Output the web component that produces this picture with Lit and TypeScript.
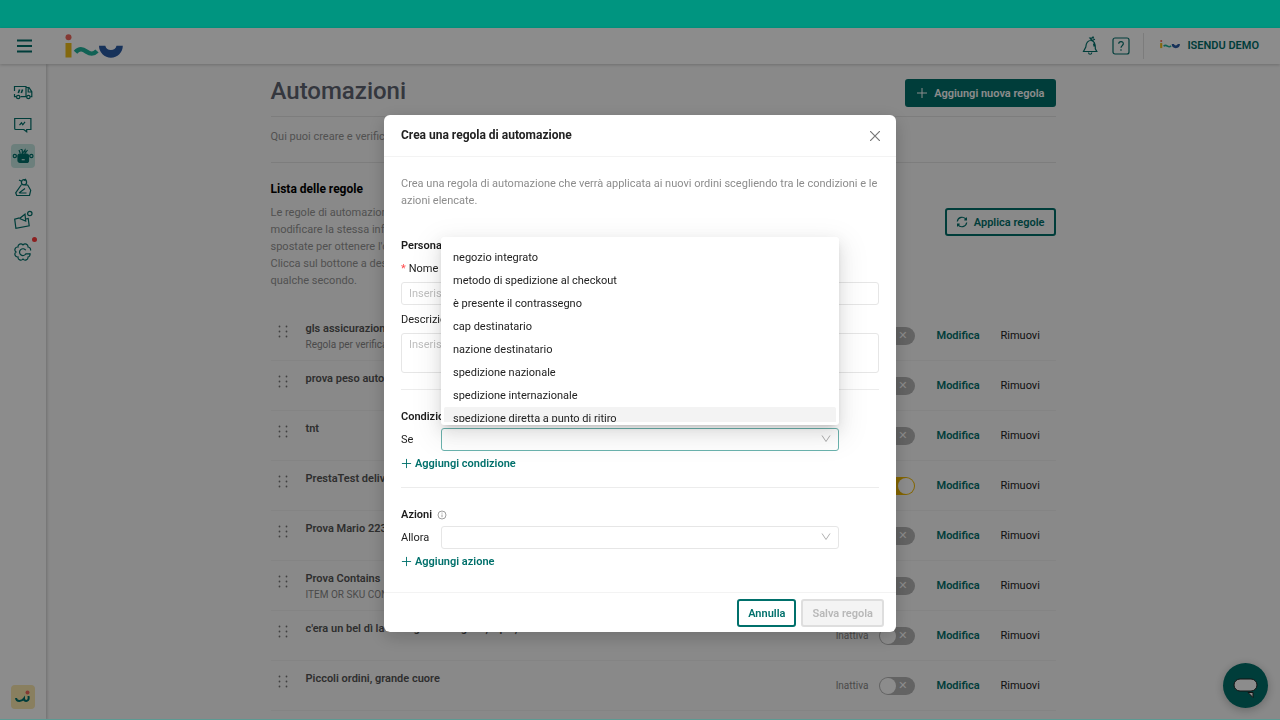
import { LitElement, html, css, svg } from "lit";
import { customElement, state, query } from "lit/decorators.js";
import { classMap } from "lit/directives/class-map.js";

interface Rule {
  title: string;
  note?: string;
  active?: boolean;
}

const RULES: Rule[] = [
  { title: "gls assicurazione", note: "Regola per verificare l'assicurazione" },
  { title: "prova peso automatico" },
  { title: "tnt" },
  { title: "PrestaTest delivery", active: true },
  { title: "Prova Mario 223" },
  { title: "Prova Contains", note: "ITEM OR SKU CONTAINS" },
  { title: "c'era un bel dì la bella gallina seguita, e poi," },
  { title: "Piccoli ordini, grande cuore" },
];

const CONDITIONS = [
  "peso",
  "negozio integrato",
  "metodo di spedizione al checkout",
  "è presente il contrassegno",
  "cap destinatario",
  "nazione destinatario",
  "spedizione nazionale",
  "spedizione internazionale",
  "spedizione diretta a punto di ritiro",
];

const NAV = [
  {
    label: "Spedizioni",
    icon: svg`<path d="M3.500 11V6.500H15v10.200H9.500M3.500 14v2.700H5"/><path d="M15 7.500h3l2.800 4.300v4.900h-1.500M17.200 8v4h3.300M15 16.700h.5"/><circle cx="7.200" cy="17" r="1.700"/><circle cx="17.400" cy="17" r="1.700"/><path stroke-width="1.600" d="M7.300 13l1.300-3.500M10.300 13l1.300-3.500"/>`,
  },
  {
    label: "Messaggi",
    icon: svg`<path d="M13 17.500H4.700a1 1 0 0 1-1-1V6.500h16.200v11h-4.200v2.200l-3-2.200"/><path d="M8.500 13.200l2-2.400 1.300 2 2.200-2.900"/>`,
  },
  {
    label: "Automazioni",
    active: true,
    icon: svg`<rect x="7" y="10" width="10.500" height="8.500" rx="2" fill="currentColor"/><path d="M10.700 15.700h3" stroke="#c5e8e2"/><circle cx="3.800" cy="12" r="1.600"/><circle cx="20.400" cy="12" r="1.600"/><path d="M5.400 12h1M18 12h1M8 6l1.300 3.500M11.200 6l.2 3.500L14 6v3.500L16.500 6M9.500 5.500h2"/>`,
  },
  {
    label: "Clienti",
    icon: svg`<circle cx="13" cy="6.300" r="2.600"/><path d="M8 4l3 1.500M13 4.500l2-1.500M10.500 8.500l-5.800 8.300 1 2.700h12.800l1.200-5.200-3-5.300h-3M8 17l6-4.500M8.500 17h7"/>`,
  },
  {
    label: "Campagne",
    icon: svg`<path d="M8.500 9.800l-4.800 1.400 1.200 9.200 13.300-2.600-1-7.300-2.400.5"/><path d="M8.500 10.500l5.500-4.300.7 6.800-6.200-2.500"/><circle cx="18.800" cy="5.500" r="2.200"/>`,
  },
  {
    label: "Impostazioni",
    badge: true,
    icon: svg`<path d="M18.800 13.500A2.600 2.600 0 0 1 17 17a2.800 2.800 0 0 1-5 2a2.800 2.800 0 0 1-5-2a2.800 2.800 0 0 1-2-5a2.800 2.800 0 0 1 2-5a2.800 2.800 0 0 1 5-2a2.800 2.800 0 0 1 5 2a2.800 2.800 0 0 1 2.500 3.500"/><path d="M14.800 10.300a3.400 3.400 0 1 0 .1 3.500h4.500"/>`,
  },
];

const brand = svg`
  <circle cx="3.500" cy="3.200" r="3" fill="#f0695e"/>
  <rect x="0.500" y="9" width="6" height="14.500" fill="#eebd1a"/>
  <path d="M10.500 18.300c4-4.500 7.500-3.200 11-.7 3.500 2.400 6.500 3.500 10.500-.6" fill="none" stroke="#1fb39b" stroke-width="4.600"/>
  <path d="M34 11.800h6.300a5.800 5.800 0 0 0 11.200 0h6.300a11.900 11.900 0 0 1-23.800 0z" fill="#2b5ba5"/>`;

const plus = svg`<path d="M6 1v10M1 6h10"/>`;
const chevron = html`<svg class="chevron" width="10" height="10" viewBox="0 0 10 10" aria-hidden="true"><path d="M1 1.500l4 6 4-6"/></svg>`;
const info = html`<svg class="info" width="10" height="10" viewBox="0 0 10 10" aria-hidden="true"><circle cx="5" cy="5" r="4"/><path d="M5 4.500v2.700M5 2.600v1"/></svg>`;

@customElement("app-root")
export class AppRoot extends LitElement {
  @state() private rules = RULES;
  @query(".options") private options!: HTMLElement;

  static styles = css`
    :host {
      --teal: #00706b;
      display: block;
      height: 100vh;
      overflow: hidden;
      font: 11px/17px Roboto, "Liberation Sans", sans-serif;
      color: #222;
    }
    *, *::before { box-sizing: border-box; }
    h1, h2, h3, p, ul { margin: 0; padding: 0; font-size: inherit; }
    ul { list-style: none; }
    button, input, textarea, select { font: inherit; color: inherit; margin: 0; }
    button { cursor: pointer; padding: 0; border: 0; background: none; }
    a { color: inherit; text-decoration: none; }
    svg { flex: none; display: block; fill: none; stroke: currentColor; }

    .app { display: flex; flex-direction: column; height: 100%; background: #fafafa; }
    .banner { flex: none; height: 28px; background: #009580; }
    .topbar {
      flex: none; display: flex; align-items: center; height: 36px; padding: 0 21px 1px 16px;
      background: #fff; box-shadow: 0 1px 3px rgba(0, 0, 0, .2); color: var(--teal); z-index: 1;
    }
    .brand { margin-left: 32px; stroke: none; }
    .tools { display: flex; align-items: center; margin-left: auto; gap: 13px; }
    .account { display: flex; align-items: center; gap: 7px; height: 26px; padding-left: 16px; border-left: 1px solid #e2e2e2; font-weight: 600; }
    .brand-small { stroke: none; }

    .body { flex: 1; min-height: 0; display: flex; }
    .side {
      flex: none; display: flex; flex-direction: column; gap: 8px; width: 46px; padding: 16px 0 11px;
      align-items: center; background: #fff; box-shadow: 1px 0 3px rgba(0, 0, 0, .2); color: var(--teal);
    }
    .nav { position: relative; display: block; width: 24px; height: 24px; border-radius: 4px; stroke-width: 1.200; }
    .nav.on { background: #c5e8e2; }
    .nav.note { margin-top: auto; background: #f9e7ad; }
    .dot { position: absolute; top: -3px; right: -2px; width: 5px; height: 5px; border-radius: 50%; background: #ff3b3b; }

    .main { flex: 1; min-width: 0; padding: 15px 24px 0; }
    .content { max-width: 785px; margin: 0 auto; }
    .head { display: flex; align-items: flex-start; justify-content: space-between; height: 38px; border-bottom: 1px solid #e4e4e4; }
    h1 { font-size: 24px; line-height: 25px; font-weight: 500; color: #5f6472; }
    .primary, .outline {
      display: flex; align-items: center; justify-content: center; gap: 6px; height: 28px; padding: 0 9px;
      border: 2px solid var(--teal); border-radius: 3px; font-weight: 600; white-space: nowrap;
    }
    .primary { background: var(--teal); color: #fff; }
    .outline { background: #fff; color: var(--teal); }
    .outline:disabled { border-color: #dedede; background: #f4f4f4; color: #b8b8b8; }
    .lead { padding: 11px 0 17px; border-bottom: 1px solid #e4e4e4; color: #949494; }
    .intro { display: flex; align-items: flex-start; justify-content: space-between; padding: 18px 0 22px; }
    .intro h2 { margin-bottom: 6px; font-size: 12px; font-weight: 700; color: #000; }
    .intro p { color: #949494; }
    .intro .outline { margin-top: 27px; background: #fafafa; }

    .rule {
      display: grid; grid-template-columns: 35px 1fr auto 36px 86px 40px; height: 50px; padding-right: 15px;
      align-items: center; border-bottom: 1px solid #f0f0f0;
    }
    .grip { align-self: start; margin: 14px 0 0 7px; cursor: grab; fill: #777; stroke: none; }
    .text { align-self: start; padding-top: 10px; line-height: 16px; }
    .text h3 { font-weight: 600; color: #555; }
    .text p, .status { font-size: 10px; color: #888; }
    .status { margin-right: 10px; }
    .switch { appearance: none; display: block; position: relative; width: 36px; height: 18px; margin: 0; border-radius: 9px; background: #b4b4b4; cursor: pointer; }
    .switch::before { content: ""; position: absolute; top: 1px; left: 1px; width: 16px; height: 16px; border-radius: 50%; background: #fff; }
    .switch::after { content: "✕"; position: absolute; right: 7px; top: 1px; font: 11px/16px "DejaVu Sans", sans-serif; color: #fff; }
    .switch:checked { background: #f0b800; }
    .switch:checked::before { left: auto; right: 1px; }
    .switch:checked::after { content: none; }
    .edit { padding-left: 22px; font-weight: 600; color: var(--teal); }

    .chat {
      position: fixed; right: 12px; bottom: 12px; width: 45px; height: 45px; border-radius: 50%;
      background: var(--teal); box-shadow: 0 2px 10px rgba(0, 0, 0, .25);
    }
    .edge { position: fixed; inset: auto 0 0; height: 1px; background: #5c9a93; z-index: 3; }

    .mask { position: fixed; inset: 28px 0 0; display: flex; align-items: flex-start; justify-content: center; padding-top: 87px; background: rgba(0, 0, 0, .45); z-index: 2; }
    .modal { width: 512px; max-width: 100%; border-radius: 6px; background: #fff; box-shadow: 0 5px 18px rgba(0, 0, 0, .2); }
    .modal-head { display: flex; align-items: center; justify-content: space-between; height: 42px; padding: 0 16px 0 17px; border-bottom: 1px solid #f3f3f3; }
    .modal-head h2 { font-size: 12px; font-weight: 700; }
    .close { color: #777; }
    .form { padding: 18px 17px 22px; }
    .form > p { color: #8c8c8c; }
    .form h3 { display: flex; align-items: center; gap: 5px; font-weight: 600; color: #1c1c1c; }
    .form h3.first { margin: 28px 0 6px; }
    .info { color: #888; stroke-width: .8; }
    .field { display: block; }
    .req { margin-right: 3px; color: #ff4d4f; }
    .box { display: block; width: 100%; height: 23px; padding: 0 7px; border: 1px solid #e6e6e6; border-radius: 3px; background: #fff; outline: 0; resize: none; }
    .box::placeholder { color: #bfbfbf; }
    .field .box { margin: 5px 0 6px; }
    .field textarea.box { height: 40px; margin: 5px 0 16px; padding: 2px 7px; }
    .part { padding-top: 18px; border-top: 1px solid #ececec; }
    .part + .part { margin-top: 15px; }
    .line { display: grid; grid-template-columns: 40px 1fr 40px; align-items: center; margin: 3px 0 4px; }
    .picker { position: relative; }
    .picker select { appearance: none; }
    .chevron { position: absolute; right: 8px; top: 6px; color: #b0b0b0; pointer-events: none; }
    .open .box { border-color: #6bb3ae; }
    .menu {
      position: absolute; left: 0; right: 0; bottom: 26px; padding: 3px; border-radius: 3px; background: #fff;
      box-shadow: 0 3px 6px -4px rgba(0, 0, 0, .3), 0 6px 16px rgba(0, 0, 0, .1), 0 9px 28px 8px rgba(0, 0, 0, .06);
    }
    .options { height: 182px; overflow: hidden; }
    .option { display: block; width: 100%; height: 23px; padding: 0 9px; border-radius: 2px; text-align: left; color: #222; }
    .option.on { background: #f3f3f3; }
    .add { display: flex; align-items: center; gap: 3px; font-weight: 600; color: var(--teal); }
    .modal-foot { display: flex; justify-content: flex-end; gap: 5px; padding: 6px 12px 5px; border-top: 1px solid #f3f3f3; }
  `;

  firstUpdated() {
    this.options.scrollTop = 17;
  }

  private toggle(index: number) {
    this.rules = this.rules.map((r, i) => (i === index ? { ...r, active: !r.active } : r));
  }

  private renderRule(rule: Rule, i: number) {
    return html`<li class="rule">
      <svg class="grip" width="10" height="13" viewBox="0 0 10 13" aria-hidden="true">
        ${[1.5, 6.5, 11.5].map((y) => svg`<circle cx="1.500" cy=${y} r=".9"/><circle cx="8.500" cy=${y} r=".9"/>`)}
      </svg>
      <div class="text"><h3>${rule.title}</h3>${rule.note ? html`<p>${rule.note}</p>` : ""}</div>
      <label class="status" for="rule-${i}">${rule.active ? "Attiva" : "Inattiva"}</label>
      <input class="switch" id="rule-${i}" type="checkbox" .checked=${!!rule.active} @change=${() => this.toggle(i)} />
      <a class="edit" href="#">Modifica</a>
      <a class="remove" href="#">Rimuovi</a>
    </li>`;
  }

  render() {
    return html`
      <div class="app">
        <div class="banner"></div>
        <header class="topbar">
          <button aria-label="Menu">
            <svg width="17" height="16" viewBox="0 0 17 16" stroke-width="2.200"><path d="M1 2.500h15M1 8h15M1 13.500h15"/></svg>
          </button>
          <svg class="brand" width="58" height="24" viewBox="0 0 58 24" role="img" aria-label="isendu">${brand}</svg>
          <div class="tools">
            <button aria-label="Notifiche">
              <svg width="18" height="20" viewBox="0 0 18 20" stroke-width="1.200"><path d="M2.500 15.500h13.300l-1.500-2.700c.2-4.300-.1-7.600-4-8.300C6.200 4.300 5.100 7.500 4.800 11l-2.300 4.500zM7.500 16.500c.3 2.300 3 2.300 3.300 0M11 4.500L9 2.200h2L12 1l.8 1.500M11 4.500l3-1.300M12.500 7.500l.7 3"/></svg>
            </button>
            <button aria-label="Aiuto">
              <svg width="18" height="18" viewBox="0 0 18 18" stroke-width="1.200"><rect x="1" y="1" width="16" height="16" rx="2"/><path d="M6.700 6.700c.2-3 4.800-2.800 4.600.2-.1 1.700-2.300 1.900-2.300 3.900M9 12.300v1.400"/></svg>
            </button>
            <a class="account" href="#">
              <svg class="brand-small" width="20" height="13" viewBox="0 0 58 32" aria-hidden="true">${brand}</svg>
              <span>ISENDU DEMO</span>
            </a>
          </div>
        </header>
        <div class="body">
          <nav class="side">
            ${NAV.map((n) => html`<a class=${classMap({ nav: true, on: !!n.active })} href="#" aria-label=${n.label}>
              <svg width="24" height="24" viewBox="0 0 24 24">${n.icon}</svg>
              ${n.badge ? html`<span class="dot"></span>` : ""}
            </a>`)}
            <a class="nav note" href="#" aria-label="isendu">
              <svg width="24" height="24" viewBox="0 0 24 24" stroke="#eebd1a" stroke-width="2"><path d="M5 13c.5 4 5.500 4 8 .5 0 3 4.500 3.500 4.700-.5l-.2-2"/><circle cx="16.500" cy="7.500" r="2" fill="#f0695e" stroke="none"/></svg>
            </a>
          </nav>
          <main class="main">
            <div class="content">
              <div class="head">
                <h1>Automazioni</h1>
                <button class="primary"><svg width="12" height="12" viewBox="0 0 12 12">${plus}</svg>Aggiungi nuova regola</button>
              </div>
              <p class="lead">Qui puoi creare e verificare le regole di automazione.</p>
              <section class="intro">
                <div>
                  <h2>Lista delle regole</h2>
                  <p>Le regole di automazione vengono applicate in ordine. Se due regole vanno a<br />modificare la stessa informazione, prevale l'ultima. Le regole possono essere<br />spostate per ottenere l'ordine desiderato.<br />Clicca sul bottone a destra per applicare le regole, potrebbe richiedere<br />qualche secondo.</p>
                </div>
                <button class="outline">
                  <svg width="12" height="12" viewBox="0 0 12 12" stroke-width="1.200"><path d="M1.300 5.500a4.800 4.800 0 0 1 8.800-2M10.700 6.500a4.800 4.800 0 0 1-8.800 2M10.400 1.500v2.300H8.300M1.600 10.500V8.200h2.100"/></svg>
                  Applica regole
                </button>
              </section>
              <ul>${this.rules.map((r, i) => this.renderRule(r, i))}</ul>
            </div>
          </main>
        </div>
        <button class="chat" aria-label="Chat">
          <svg width="45" height="45" viewBox="0 0 45 45" fill="#fff" stroke="none"><rect x="11" y="16" width="23" height="12" rx="6" fill="#fff"/><path d="M25 29.500h5v5z" fill="#fff"/></svg>
        </button>
      </div>

      <div class="mask">
        <section class="modal" role="dialog" aria-labelledby="modal-title">
          <div class="modal-head">
            <h2 id="modal-title">Crea una regola di automazione</h2>
            <button class="close" aria-label="Chiudi"><svg width="10" height="10" viewBox="0 0 10 10" stroke-width="1.200"><path d="M0 0l10 10M10 0L0 10"/></svg></button>
          </div>
          <div class="form">
            <p>Crea una regola di automazione che verrà applicata ai nuovi ordini scegliendo tra le condizioni e le azioni elencate.</p>
            <h3 class="first">Personalizza la regola</h3>
            <label class="field"><span class="req">*</span>Nome regola<input class="box" placeholder="Inserisci il nome" /></label>
            <label class="field">Descrizione<textarea class="box" placeholder="Inserisci la descrizione"></textarea></label>
            <div class="part">
              <h3>Condizioni ${info}</h3>
              <div class="line">
                <label for="condition">Se</label>
                <div class="picker open">
                  <select class="box" id="condition"><option></option></select>
                  ${chevron}
                  <div class="menu">
                    <div class="options" role="listbox">
                      ${CONDITIONS.map((c, i) => html`<button role="option" class=${classMap({ option: true, on: i === CONDITIONS.length - 1 })}>${c}</button>`)}
                    </div>
                  </div>
                </div>
              </div>
              <button class="add"><svg width="11" height="11" viewBox="0 0 12 12">${plus}</svg>Aggiungi condizione</button>
            </div>
            <div class="part">
              <h3>Azioni ${info}</h3>
              <div class="line">
                <label for="action">Allora</label>
                <div class="picker">
                  <select class="box" id="action"><option></option></select>
                  ${chevron}
                </div>
              </div>
              <button class="add"><svg width="11" height="11" viewBox="0 0 12 12">${plus}</svg>Aggiungi azione</button>
            </div>
          </div>
          <div class="modal-foot">
            <button class="outline">Annulla</button>
            <button class="outline" disabled>Salva regola</button>
          </div>
        </section>
      </div>
      <div class="edge"></div>
    `;
  }
}
